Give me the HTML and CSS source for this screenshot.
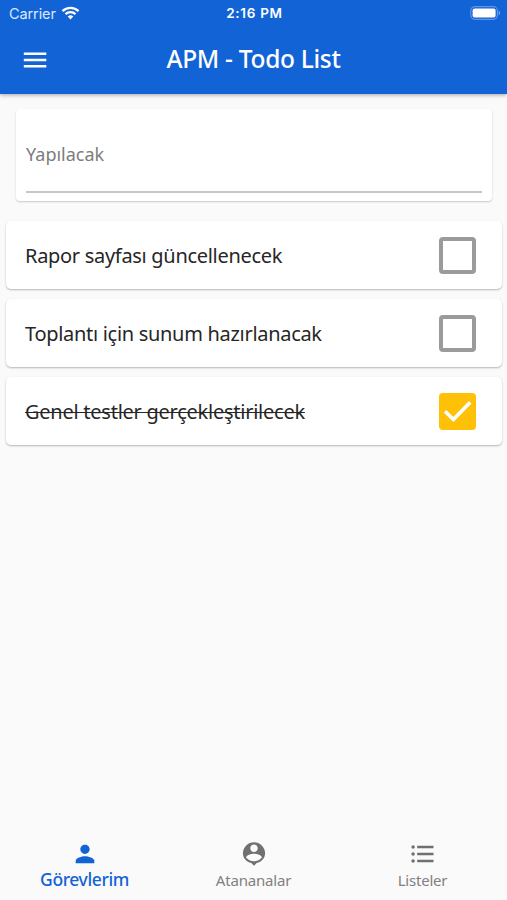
FILE: index.html
```html
<!DOCTYPE html>
<html lang="tr">
<head>
<meta charset="utf-8">
<title>APM - Todo List</title>
<link rel="stylesheet" href="styles.css">
</head>
<body>
<header class="header">
  <div class="status">
    <div class="carrier"><span>Carrier</span>
      <svg class="wifi" viewBox="0 0 18 14"><g fill="none" stroke="#fff" stroke-width="2.3"><path d="M1 5.1a11.4 11.4 0 0 1 16 0"/><path d="M4 8.1a7.1 7.1 0 0 1 10 0"/></g><path fill="#fff" d="M9 13.4 6.2 10.6a4 4 0 0 1 5.6 0z"/></svg>
    </div>
    <span class="time">2:16 PM</span>
    <svg class="battery" viewBox="0 0 31 14"><rect x=".8" y=".7" width="26.6" height="12.6" rx="4" fill="none" stroke="#5f94e6" stroke-width="1.2"/><rect x="2.6" y="2.5" width="23" height="9" rx="2" fill="#fff"/><path fill="#78a6ee" d="M28.7 4.6q3 2.4 0 4.8z"/></svg>
  </div>
  <div class="toolbar">
    <svg class="menu" viewBox="0 0 30 30"><path fill="#fff" d="M3.8 7.5h22.5V10H3.8zm0 6.2h22.5v2.5H3.800zm0 6.300h22.500v2.500H3.800z"/></svg>
    <h1 class="title">APM - Todo List</h1>
  </div>
</header>
<main class="content">
  <section class="entry"><div class="field">Yapılacak</div></section>
  <ul class="tasks">
    <li class="task"><span class="label">Rapor sayfası güncellenecek</span><span class="box"></span></li>
    <li class="task"><span class="label">Toplantı için sunum hazırlanacak</span><span class="box"></span></li>
    <li class="task"><span class="label done">Genel testler gerçekleştirilecek</span><span class="box checked"><svg viewBox="0 0 37 37"><path d="M6 18.300 14.400 26.500 31.200 9.300" fill="none" stroke="#fff" stroke-width="3.600"/></svg></span></li>
  </ul>
</main>
<nav class="tabs">
  <div class="tab active"><svg viewBox="0 0 24 24"><path d="M12 12c2.21 0 4-1.79 4-4s-1.79-4-4-4-4 1.79-4 4 1.79 4 4 4zm0 2c-2.67 0-8 1.34-8 4v2h16v-2c0-2.66-5.33-4-8-4z"/></svg><span>Görevlerim</span></div>
  <div class="tab mid"><svg viewBox="0 0 24 24"><path fill-rule="evenodd" d="M12 2a9.500 9.500 0 0 0-9.500 9.300c0 4.170 3 7.500 7.200 8.500L12 22l2.300-2.200c4.200-1 7.200-4.330 7.200-8.500A9.500 9.500 0 0 0 12 2zm0 1.800c1.800 0 3.200 1.400 3.200 3.200s-1.400 3.200-3.200 3.200S8.800 8.800 8.800 7s1.400-3.200 3.200-3.200zm0 14.500c-2.800 0-5.200-1.280-6.800-3.220.03-2.200 4.500-3.280 6.800-3.280s6.770 1.080 6.800 3.280c-1.600 1.940-4 3.220-6.800 3.220z"/></svg><span>Atananalar</span></div>
  <div class="tab last"><svg viewBox="0 0 24 24"><path d="M7 5h14v2H7zm0 8v-2h14v2zM3.500 4.500a1.500 1.500 0 1 1 0 3 1.500 1.500 0 0 1 0-3zm0 6a1.500 1.500 0 1 1 0 3 1.500 1.500 0 0 1 0-3zM7 19v-2h14v2zm-3.500-2.500a1.500 1.500 0 1 1 0 3 1.500 1.500 0 0 1 0-3z"/></svg><span>Listeler</span></div>
</nav>
</body>
</html>
```
FILE: styles.css
```css
* { box-sizing: border-box; }
body {
  margin: 0;
  height: 900px;
  display: flex;
  flex-direction: column;
  overflow: hidden;
  background: #fafafa;
  color: #262626;
  font-family: "Noto Sans", sans-serif;
}
.header {
  height: 94px;
  background: #1263d6;
  color: #fff;
  box-shadow: 0 1px 4px rgba(0, 0, 0, .35);
}
.status {
  height: 27px;
  padding: 0 6px 0 9px;
  display: grid;
  grid-template-columns: 1fr auto 1fr;
  align-items: center;
  font: 14.5px/27px Inter, sans-serif;
}
.carrier { display: flex; align-items: center; gap: 5px; color: #dbe9ff; }
.carrier span { letter-spacing: -.1px; }
.wifi { width: 19px; height: 14px; margin-top: -2px; }
.time { font-size: 13.5px; font-weight: 600; letter-spacing: .7px; margin-right: 1px; }
.battery { width: 31px; height: 14px; margin-top: -1px; justify-self: end; }
.toolbar {
  height: 65px;
  padding: 0 20px;
  display: grid;
  grid-template-columns: 30px 1fr 30px;
  align-items: center;
}
.menu { width: 30px; height: 30px; }
.title { margin: -2px 0 0; text-align: center; font-size: 24.5px; font-weight: 500; letter-spacing: -.3px; white-space: nowrap; }
.content { flex: 1; padding: 15px 5px 0 6px; }
.entry {
  height: 92px;
  margin: 0 10px 20px;
  padding: 0 10px 8px;
  background: #fff;
  border-radius: 4px;
  box-shadow: 0 1px 2px rgba(0, 0, 0, .2);
}
.field { height: 84px; padding-top: 31px; border-bottom: 2px solid #c6c6c6; color: #7c7c7c; font-size: 18px; line-height: 28px; }
.tasks { margin: 0; padding: 0; list-style: none; display: grid; gap: 10px; }
.task {
  height: 68px;
  padding: 0 26px 0 19px;
  display: flex;
  align-items: center;
  justify-content: space-between;
  background: #fff;
  border-radius: 5px;
  box-shadow: 0 1px 2px rgba(0, 0, 0, .28);
}
.label { font-size: 20px; letter-spacing: -.3px; white-space: nowrap; }
.done { letter-spacing: -.25px; text-decoration: line-through; text-decoration-thickness: 1px; }
.box { width: 37px; height: 37px; border: 4px solid #9b9b9b; border-radius: 4px; }
.checked { border: 0; background: #ffc107; }
.checked svg { display: block; width: 37px; height: 37px; }
.tabs { height: 73px; display: grid; grid-template-columns: repeat(3, 1fr); }
.tab { display: flex; flex-direction: column; align-items: center; padding-top: 13px; color: #808080; font-size: 15px; line-height: 25px; letter-spacing: -.2px; }
.tab svg { width: 28px; height: 28px; fill: #707070; }
.active { color: #1263d6; font-size: 17.5px; font-weight: 500; letter-spacing: -.4px; line-height: 22px; }
.active svg { fill: #1263d6; }
```
